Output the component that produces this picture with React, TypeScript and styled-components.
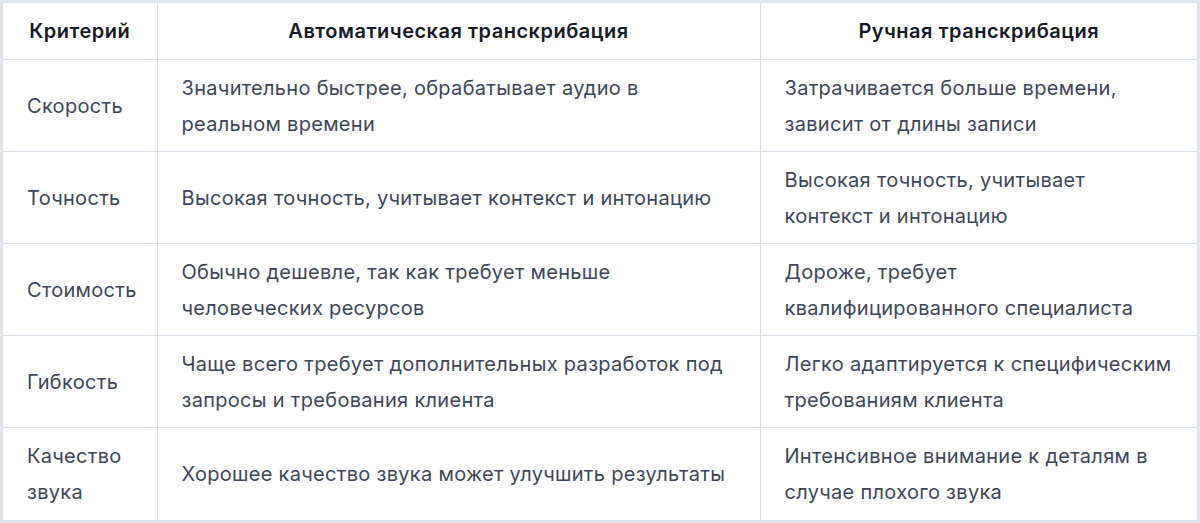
import React from "react";
import styled, { createGlobalStyle } from "styled-components";

const Global = createGlobalStyle`
  html, body { margin: 0; padding: 0; background: #ffffff; }
  body { font-family: Inter, "Open Sans", "Liberation Sans", sans-serif; }
`;

const Frame = styled.div`
  box-sizing: border-box;
  width: 1200px;
  border: 3px solid #dfe4ec;
  background: #ffffff;
`;

const Table = styled.table`
  width: 100%;
  border-collapse: collapse;
  border-style: hidden;
  table-layout: fixed;
`;

const Col = styled.col<{ $w: number }>`
  width: ${(p) => p.$w}px;
`;

const Th = styled.th`
  box-sizing: border-box;
  height: 56px;
  padding: 10px 24px;
  border: 1px solid #d6dde7;
  font-size: 20px;
  line-height: 36px;
  letter-spacing: 0.5px;
  font-weight: 600;
  color: #151a26;
  text-align: center;
  vertical-align: middle;
  white-space: nowrap;
`;

const Td = styled.td`
  box-sizing: border-box;
  height: 92px;
  padding: 9px 24px;
  border: 1px solid #d6dde7;
  font-size: 20px;
  line-height: 36px;
  letter-spacing: 0.3px;
  font-weight: 400;
  color: #3d4658;
  text-align: left;
  vertical-align: middle;
  white-space: nowrap;
`;

const rows: string[][][] = [
  [
    ["Скорость"],
    ["Значительно быстрее, обрабатывает аудио в", "реальном времени"],
    ["Затрачивается больше времени,", "зависит от длины записи"],
  ],
  [
    ["Точность"],
    ["Высокая точность, учитывает контекст и интонацию"],
    ["Высокая точность, учитывает", "контекст и интонацию"],
  ],
  [
    ["Стоимость"],
    ["Обычно дешевле, так как требует меньше", "человеческих ресурсов"],
    ["Дороже, требует", "квалифицированного специалиста"],
  ],
  [
    ["Гибкость"],
    ["Чаще всего требует дополнительных разработок под", "запросы и требования клиента"],
    ["Легко адаптируется к специфическим", "требованиям клиента"],
  ],
  [
    ["Качество", "звука"],
    ["Хорошее качество звука может улучшить результаты"],
    ["Интенсивное внимание к деталям в", "случае плохого звука"],
  ],
];

function Lines({ lines }: { lines: string[] }) {
  return (
    <>
      {lines.map((l, i) => (
        <React.Fragment key={i}>
          {i > 0 && <br />}
          {l}
        </React.Fragment>
      ))}
    </>
  );
}

export default function App() {
  return (
    <>
      <Global />
      <Frame>
        <Table>
          <colgroup>
            <Col $w={154} />
            <Col $w={603} />
            <Col $w={437} />
          </colgroup>
          <thead>
            <tr>
              <Th>Критерий</Th>
              <Th>Автоматическая транскрибация</Th>
              <Th>Ручная транскрибация</Th>
            </tr>
          </thead>
          <tbody>
            {rows.map((r, i) => (
              <tr key={i}>
                {r.map((cell, j) => (
                  <Td key={j}>
                    <Lines lines={cell} />
                  </Td>
                ))}
              </tr>
            ))}
          </tbody>
        </Table>
      </Frame>
    </>
  );
}
